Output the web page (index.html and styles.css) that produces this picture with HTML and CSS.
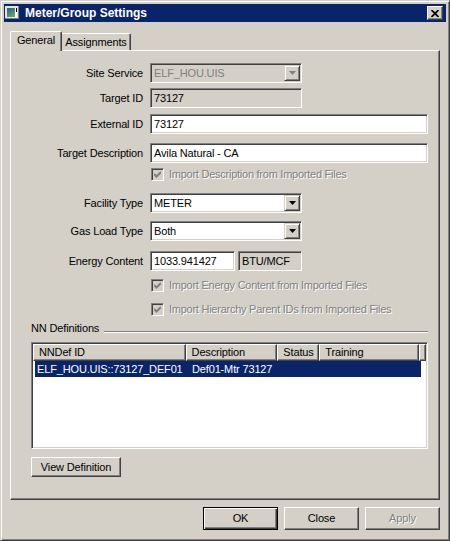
FILE: index.html
```html
<!DOCTYPE html>
<html>
<head>
<meta charset="utf-8">
<title>Meter/Group Settings</title>
<link rel="stylesheet" href="styles.css">
</head>
<body>
<div class="window">
  <div class="titlebar">
    <svg class="app-icon" width="16" height="16" viewBox="0 0 16 16">
      <defs>
        <linearGradient id="ig" x1="0" y1="0" x2="0.6" y2="1">
          <stop offset="0" stop-color="#2c5a86"/>
          <stop offset="1" stop-color="#5da863"/>
        </linearGradient>
      </defs>
      <rect x="0" y="0" width="14" height="13" fill="#e6e4e0"/>
      <rect x="0" y="12" width="14" height="1" fill="#808080"/>
      <rect x="13" y="0" width="1" height="13" fill="#808080"/>
      <rect x="2" y="2" width="8" height="9" fill="url(#ig)"/>
      <rect x="10" y="2" width="2" height="9" fill="#ffffff"/>
      <rect x="11" y="2" width="1" height="4" fill="#000000"/>
    </svg>
    <span class="title">Meter/Group Settings</span>
    <div class="close-btn">
      <svg width="8" height="7" viewBox="0 0 8 7"><path d="M0.5 0 L7.5 7 M7.5 0 L0.5 7" stroke="#000" stroke-width="1.7" fill="none"/></svg>
    </div>
  </div>

  <div class="tabs">
    <div class="tab tab-active">General</div>
    <div class="tab tab-inactive">Assignments</div>
  </div>

  <div class="panel">
    <div class="row">
      <span class="lbl">Site Service</span>
      <div class="field combo ro w-short">
        <span class="txt-disabled">ELF_HOU.UIS</span>
        <span class="drop"><svg width="7" height="4" viewBox="0 0 7 4"><polygon points="0,0 7,0 3.5,4" fill="#808080"/></svg></span>
      </div>
    </div>
    <div class="row mt-5">
      <span class="lbl">Target ID</span>
      <div class="field ro w-short">73127</div>
    </div>
    <div class="row mt-6">
      <span class="lbl">External ID</span>
      <div class="field w-long">73127</div>
    </div>
    <div class="row mt-9">
      <span class="lbl">Target Description</span>
      <div class="field w-long">Avila Natural - CA</div>
    </div>
    <div class="chk-row mt-5">
      <span class="chk"><svg width="7" height="7" viewBox="0 0 7 7"><polyline points="0,3 2.5,5.5 7,1" fill="none" stroke="#808080" stroke-width="2.1"/></svg></span>
      <span class="chk-label">Import Description from Imported Files</span>
    </div>
    <div class="row mt-12">
      <span class="lbl">Facility Type</span>
      <div class="field combo w-short">
        <span>METER</span>
        <span class="drop"><svg width="7" height="4" viewBox="0 0 7 4"><polygon points="0,0 7,0 3.5,4" fill="#000"/></svg></span>
      </div>
    </div>
    <div class="row mt-8">
      <span class="lbl">Gas Load Type</span>
      <div class="field combo w-short">
        <span>Both</span>
        <span class="drop"><svg width="7" height="4" viewBox="0 0 7 4"><polygon points="0,0 7,0 3.5,4" fill="#000"/></svg></span>
      </div>
    </div>
    <div class="row mt-10">
      <span class="lbl">Energy Content</span>
      <div class="field w-energy">1033.941427</div>
      <div class="field ro w-unit">BTU/MCF</div>
    </div>
    <div class="chk-row mt-8">
      <span class="chk"><svg width="7" height="7" viewBox="0 0 7 7"><polyline points="0,3 2.5,5.5 7,1" fill="none" stroke="#808080" stroke-width="2.1"/></svg></span>
      <span class="chk-label">Import Energy Content from Imported Files</span>
    </div>
    <div class="chk-row mt-11">
      <span class="chk"><svg width="7" height="7" viewBox="0 0 7 7"><polyline points="0,3 2.5,5.5 7,1" fill="none" stroke="#808080" stroke-width="2.1"/></svg></span>
      <span class="chk-label">Import Hierarchy Parent IDs from Imported Files</span>
    </div>

    <div class="group-head mt-6">
      <span class="group-title">NN Definitions</span>
      <span class="group-line"></span>
    </div>

    <div class="list mt-7">
      <div class="lv-head">
        <div class="lv-col c1">NNDef ID</div>
        <div class="lv-col c2">Description</div>
        <div class="lv-col c3">Status</div>
        <div class="lv-col c4">Training</div>
        <div class="lv-col c5"></div>
      </div>
      <div class="lv-row selected">
        <div class="lv-cell c1">ELF_HOU.UIS::73127_DEF01</div>
        <div class="lv-cell c2">Def01-Mtr 73127</div>
      </div>
    </div>

    <div class="btn btn-view mt-8">View Definition</div>
  </div>

  <div class="footer">
    <div class="btn btn-foot btn-default">OK</div>
    <div class="btn btn-foot">Close</div>
    <div class="btn btn-foot btn-disabled">Apply</div>
  </div>
</div>
</body>
</html>
```

FILE: styles.css
```css
* { box-sizing: border-box; }

body {
  margin: 0;
  font-family: "Liberation Sans", Arial, sans-serif;
  font-size: 11px;
  letter-spacing: -0.15px;
  line-height: 13px;
  color: #000;
  background: #d4d0c8;
}

.window {
  width: 450px;
  height: 541px;
  background: #d4d0c8;
  border: 1px solid;
  border-color: #d4d0c8 #404040 #404040 #d4d0c8;
  box-shadow: inset 1px 1px #fff, inset -1px -1px #808080;
  padding: 3px;
  display: flex;
  flex-direction: column;
}

/* Title bar */
.titlebar {
  height: 18px;
  flex-shrink: 0;
  background: #0a246a;
  display: flex;
  align-items: center;
}
.app-icon { margin-left: 1px; margin-top: 1px; flex-shrink: 0; }
.title {
  margin-left: 4px;
  color: #fff;
  font-weight: bold;
  font-size: 12px;
  letter-spacing: 0;
}
.close-btn {
  margin-left: auto;
  margin-right: 3px;
  width: 16px;
  height: 14px;
  background: #d4d0c8;
  border: 1px solid;
  border-color: #fff #404040 #404040 #fff;
  box-shadow: inset -1px -1px #808080;
  display: flex;
  align-items: center;
  justify-content: center;
}

/* Tabs */
.tabs {
  display: flex;
  align-items: flex-end;
  height: 20px;
  margin-top: 9px;
  margin-left: 6px;
  position: relative;
  z-index: 1;
}
.tab {
  background: #d4d0c8;
  display: flex;
  align-items: center;
  justify-content: center;
}
.tab-active {
  width: 52px;
  height: 20px;
  border-left: 1px solid #fff;
  border-top: 1px solid #fff;
  border-right: 1px solid #404040;
  box-shadow: inset -1px 0 #808080;
  padding-bottom: 2px;
  border-radius: 2px 2px 0 0;
}
.tab-inactive {
  width: 69px;
  height: 17px;
  margin-bottom: 1px;
  border-top: 1px solid #fff;
  border-right: 1px solid #404040;
  box-shadow: inset -1px 0 #808080;
  border-radius: 0 2px 0 0;
}

/* Panel */
.panel {
  margin-top: -1px;
  margin-left: 6px;
  width: 430px;
  height: 450px;
  flex-shrink: 0;
  border: 1px solid;
  border-color: #fff #404040 #404040 #fff;
  box-shadow: inset -1px -1px #808080;
  padding-top: 12px;
  display: flex;
  flex-direction: column;
}

.mt-5 { margin-top: 5px; }
.mt-6 { margin-top: 6px; }
.mt-7 { margin-top: 7px; }
.mt-8 { margin-top: 8px; }
.mt-9 { margin-top: 9px; }
.mt-10 { margin-top: 10px; }
.mt-11 { margin-top: 11px; }
.mt-12 { margin-top: 12px; }

.row {
  display: flex;
  align-items: center;
  height: 20px;
  flex-shrink: 0;
}
.lbl {
  width: 132px;
  margin-right: 7px;
  text-align: right;
}

.field {
  height: 20px;
  background: #fff;
  border: 1px solid;
  border-color: #808080 #fff #fff #808080;
  box-shadow: inset 1px 1px #404040, inset -1px -1px #d4d0c8;
  padding: 0 3px;
  display: flex;
  align-items: center;
  white-space: nowrap;
}
.ro { background: #d4d0c8; }
.w-short { width: 152px; }
.w-long { width: 278px; }
.w-energy { width: 85px; }
.w-unit { width: 64px; margin-left: 3px; }

.combo { padding-right: 1px; }
.txt-disabled { color: #808080; }
.drop {
  margin-left: auto;
  width: 16px;
  height: 16px;
  background: #d4d0c8;
  border: 1px solid;
  border-color: #d4d0c8 #404040 #404040 #d4d0c8;
  box-shadow: inset 1px 1px #fff, inset -1px -1px #808080;
  display: flex;
  align-items: center;
  justify-content: center;
}

/* Checkboxes */
.chk-row {
  display: flex;
  align-items: center;
  height: 13px;
  margin-left: 140px;
  flex-shrink: 0;
}
.chk {
  width: 13px;
  height: 13px;
  flex-shrink: 0;
  background: #d4d0c8;
  border: 1px solid;
  border-color: #808080 #fff #fff #808080;
  box-shadow: inset 1px 1px #404040, inset -1px -1px #d4d0c8;
  display: flex;
  align-items: center;
  justify-content: center;
}
.chk-label {
  margin-left: 5px;
  color: #808080;
  text-shadow: 1px 1px 0 #fff;
  white-space: nowrap;
  letter-spacing: -0.25px;
}

/* Group */
.group-head {
  display: flex;
  height: 13px;
  margin-left: 20px;
  width: 397px;
  flex-shrink: 0;
}
.group-line {
  flex: 1;
  margin-left: 5px;
  margin-top: 9px;
  height: 2px;
  border-top: 1px solid #808080;
  border-bottom: 1px solid #fff;
}

/* List view */
.list {
  margin-left: 20px;
  width: 397px;
  height: 107px;
  flex-shrink: 0;
  background: #fff;
  border: 1px solid;
  border-color: #808080 #fff #fff #808080;
  box-shadow: inset 1px 1px #404040, inset -1px -1px #d4d0c8;
  padding: 1px;
}
.lv-head {
  display: flex;
  height: 17px;
}
.lv-col {
  height: 17px;
  background: #d4d0c8;
  border: 1px solid;
  border-color: #fff #404040 #404040 #fff;
  box-shadow: inset -1px -1px #808080;
  padding-left: 5px;
  display: flex;
  align-items: center;
  white-space: nowrap;
}
.lv-col.c1 { width: 153px; }
.lv-col.c2 { width: 92px; }
.lv-col.c3 { width: 42px; }
.lv-col.c4 { width: 100px; }
.lv-col.c5 { flex: 1; }

.lv-row {
  display: flex;
  align-items: center;
  margin-left: 2px;
  width: 386px;
  height: 16px;
}
.selected { background: #0a246a; color: #fff; }
.lv-cell.c1 { width: 151px; padding-left: 2px; white-space: nowrap; }
.lv-cell.c2 { padding-left: 6px; white-space: nowrap; }

/* Buttons */
.btn {
  background: #d4d0c8;
  border: 1px solid;
  border-color: #fff #404040 #404040 #fff;
  box-shadow: inset -1px -1px #808080;
  display: flex;
  align-items: center;
  justify-content: center;
  white-space: nowrap;
}
.btn-view {
  margin-left: 20px;
  width: 90px;
  height: 20px;
  flex-shrink: 0;
}
.footer {
  display: flex;
  justify-content: flex-end;
  gap: 6px;
  margin-top: 7px;
  padding-right: 6px;
}
.btn-foot { width: 75px; height: 23px; }
.btn-default {
  border-color: #000;
  box-shadow: inset 1px 1px #fff, inset -1px -1px #404040, inset -2px -2px #808080;
}
.btn-disabled {
  color: #808080;
  text-shadow: 1px 1px 0 #fff;
}
```
